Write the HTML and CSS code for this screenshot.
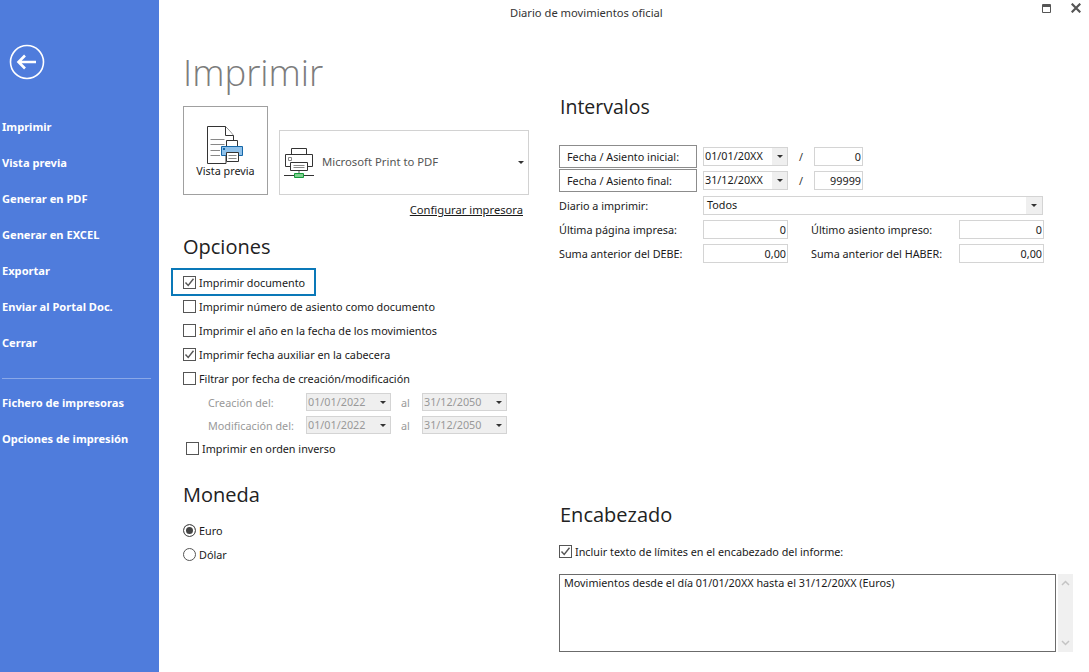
FILE: index.html
```html
<!DOCTYPE html>
<html lang="es">
  <head>
    <meta charset="UTF-8" />
    <title>Diario de movimientos oficial</title>
    <link rel="stylesheet" href="styles.css">
  </head>
  <body>
    <div class="app">
      <nav class="side">
        <svg class="back" width="36" height="36" viewBox="0 0 36 36">
          <circle cx="18" cy="18" r="16.5" fill="none" stroke="#fff" stroke-width="1.6"/>
          <path d="M9.500 18H27M16 11.500L9.500 18L16 24.500" fill="none" stroke="#fff" stroke-width="2.600"/>
        </svg>
        <a class="side-item">Imprimir</a>
        <a class="side-item">Vista previa</a>
        <a class="side-item">Generar en PDF</a>
        <a class="side-item">Generar en EXCEL</a>
        <a class="side-item">Exportar</a>
        <a class="side-item">Enviar al Portal Doc.</a>
        <a class="side-item">Cerrar</a>
        <div class="side-line"></div>
        <a class="side-item">Fichero de impresoras</a>
        <a class="side-item">Opciones de impresión</a>
      </nav>
      <div class="page">
        <header class="titlebar">
          <span class="window-title">Diario de movimientos oficial</span>
          <svg class="win-btn" width="9" height="9" viewBox="0 0 9 9">
            <path d="M.5.5H8.5V8.5H.5Z" fill="none" stroke="#555"/>
            <path d="M0 1H9V3H0Z" fill="#555"/>
          </svg>
          <svg class="win-btn win-close" width="10" height="10" viewBox="0 0 10 10">
            <path d="M.7.7L9.3 9.3M9.3.7L.7 9.3" stroke="#555" stroke-width="2.2"/>
          </svg>
        </header>
        <main class="cols">
          <section class="col-left">
            <h1>Imprimir</h1>
            <div class="print-row">
              <button class="preview-btn">
                <svg width="37" height="38" viewBox="0 0 37 38">
                  <path d="M19 24V37.5H.5V.5H18.500L26.500 9.500V14" fill="none" stroke="#333"/>
                  <path d="M18.500.5V9.500H26.500" fill="#fff" stroke="#333"/>
                  <path d="M3.500 13.500H17.500M3.500 18.500H17.500M3.500 24.500H13M3.500 29.500H13" stroke="#888"/>
                  <path d="M19.500 14.500H30.500V21H19.500Z" fill="#fff" stroke="#333"/>
                  <path d="M14.500 20.500H35.500V29.500H14.500Z" fill="#8fc1ea" stroke="#1567a8"/>
                  <path d="M16 22H18V24H16Z" fill="#1567a8"/>
                  <path d="M19.500 26.500H31.500V35.500H19.500Z" fill="#fff" stroke="#333"/>
                  <path d="M21.500 29.500H29.500M21.500 32.500H29.500" stroke="#888"/>
                </svg>
                <span>Vista previa</span>
              </button>
              <div class="printer">
                <svg width="30" height="30" viewBox="0 0 30 30">
                  <path d="M7.500 7V.5H22.500V7" fill="none" stroke="#333"/>
                  <path d="M6 18.500H1.500V6.500H28.500V18.500H24" fill="none" stroke="#333"/>
                  <path d="M4.500 9.500H7.500V12.500H4.500Z" fill="none" stroke="#888"/>
                  <path d="M6.500 14.500H23.500V22.500H6.500Z" fill="#fff" stroke="#333"/>
                  <path d="M9.500 17.500H20.500M9.500 19.500H20.500" stroke="#888"/>
                  <path d="M15 23V26" stroke="#aaa" stroke-width="2"/>
                  <path d="M0 27.500H10M20 27.500H30" stroke="#333"/>
                  <path d="M10.500 25.500H19.500V29.500H10.500Z" fill="#7ed08f" stroke="#169c3c"/>
                </svg>
                <span class="printer-name">Microsoft Print to PDF</span>
                <i class="arrow"></i>
              </div>
            </div>
            <div class="config-row"><a class="config-link">Configurar impresora</a></div>

            <h2 class="h-opciones">Opciones</h2>
            <div class="focus-box">
              <label class="check-row">
                <span class="box"><svg width="11" height="11" viewBox="0 0 11 11"><path d="M1.500 5.500L4.200 8.500L9.500 1.800" fill="none" stroke="#555" stroke-width="1.400"/></svg></span>
                Imprimir documento
              </label>
            </div>
            <label class="check-row"><span class="box"></span>Imprimir número de asiento como documento</label>
            <label class="check-row"><span class="box"></span>Imprimir el año en la fecha de los movimientos</label>
            <label class="check-row">
              <span class="box"><svg width="11" height="11" viewBox="0 0 11 11"><path d="M1.500 5.500L4.200 8.500L9.500 1.800" fill="none" stroke="#555" stroke-width="1.400"/></svg></span>
              Imprimir fecha auxiliar en la cabecera
            </label>
            <label class="check-row"><span class="box"></span>Filtrar por fecha de creación/modificación</label>
            <div class="date-filter">
              <span class="filter-label">Creación del:</span>
              <div class="combo combo-off"><span>01/01/2022</span><b><i class="arrow"></i></b></div>
              <span class="filter-al">al</span>
              <div class="combo combo-off"><span>31/12/2050</span><b><i class="arrow"></i></b></div>
            </div>
            <div class="date-filter">
              <span class="filter-label">Modificación del:</span>
              <div class="combo combo-off"><span>01/01/2022</span><b><i class="arrow"></i></b></div>
              <span class="filter-al">al</span>
              <div class="combo combo-off"><span>31/12/2050</span><b><i class="arrow"></i></b></div>
            </div>
            <label class="check-row check-inverse"><span class="box"></span>Imprimir en orden inverso</label>

            <h2 class="h-moneda">Moneda</h2>
            <label class="check-row"><span class="radio radio-on"></span>Euro</label>
            <label class="check-row"><span class="radio"></span>Dólar</label>
          </section>

          <section class="col-right">
            <h2 class="h-intervalos">Intervalos</h2>
            <div class="range-row">
              <span class="range-label">Fecha / Asiento inicial:</span>
              <div class="combo"><span>01/01/20XX</span><b><i class="arrow"></i></b></div>
              <span class="slash">/</span>
              <input class="field field-small" value="0">
            </div>
            <div class="range-row">
              <span class="range-label">Fecha / Asiento final:</span>
              <div class="combo"><span>31/12/20XX</span><b><i class="arrow"></i></b></div>
              <span class="slash">/</span>
              <input class="field field-small" value="99999">
            </div>
            <div class="form-row form-row-diario">
              <span class="form-label">Diario a imprimir:</span>
              <div class="combo combo-wide"><span>Todos</span><b><i class="arrow"></i></b></div>
            </div>
            <div class="form-row">
              <span class="form-label">Última página impresa:</span>
              <input class="field" value="0">
              <span class="form-label form-label-2">Último asiento impreso:</span>
              <input class="field" value="0">
            </div>
            <div class="form-row">
              <span class="form-label">Suma anterior del DEBE:</span>
              <input class="field" value="0,00">
              <span class="form-label form-label-2">Suma anterior del HABER:</span>
              <input class="field" value="0,00">
            </div>

            <h2 class="h-encabezado">Encabezado</h2>
            <label class="check-row check-limits">
              <span class="box"><svg width="11" height="11" viewBox="0 0 11 11"><path d="M1.500 5.500L4.200 8.500L9.500 1.800" fill="none" stroke="#555" stroke-width="1.400"/></svg></span>
              Incluir texto de límites en el encabezado del informe:
            </label>
            <div class="memo-row">
              <div class="memo">Movimientos desde el día 01/01/20XX hasta el 31/12/20XX (Euros)</div>
              <div class="scroll">
                <svg width="9" height="6" viewBox="0 0 9 6"><path d="M1 5L4.500 1.500L8 5" fill="none" stroke="#c4c4c4" stroke-width="1.500"/></svg>
                <svg width="9" height="6" viewBox="0 0 9 6"><path d="M1 1L4.500 4.500L8 1" fill="none" stroke="#c4c4c4" stroke-width="1.500"/></svg>
              </div>
            </div>
          </section>
        </main>
      </div>
    </div>
  </body>
</html>
```
FILE: styles.css
```css
* {
  box-sizing: border-box;
}
html,
body {
  margin: 0;
  padding: 0;
  height: 100%;
  overflow: hidden;
}
body {
  font-family: "Noto Sans", "Open Sans", sans-serif;
  font-size: 10.8px;
  color: #1a1a1a;
  background: #fff;
}
h1,
h2 {
  margin: 0;
  font-weight: 400;
}
.app {
  display: flex;
  height: 672px;
}

/* left blue bar */
.side {
  width: 159px;
  flex-shrink: 0;
  background: #4f7cdc;
  color: #fff;
  padding-top: 44px;
}
.back {
  display: block;
  margin: 0 0 29px 9px;
}
.side-item {
  display: block;
  height: 36px;
  line-height: 36px;
  padding-left: 2px;
  font-weight: 700;
  font-size: 11.1px;
  white-space: nowrap;
}
.side-line {
  height: 1px;
  margin: 17px 8px 6px 2px;
  background: #8aa8e8;
}

.page {
  flex-grow: 1;
  min-width: 0;
}
.titlebar {
  display: flex;
  align-items: center;
  height: 24px;
  padding-left: 351px;
}
.window-title {
  width: 532px;
  font-size: 11.2px;
  color: #333;
}
.win-btn {
  margin-top: -8px;
}
.win-close {
  margin-left: 20px;
}

.cols {
  display: flex;
}
.col-left {
  width: 401px;
  padding-left: 24px;
  flex-shrink: 0;
}
.col-right {
  flex-grow: 0;
  width: 520px;
}

h1 {
  font-family: "Open Sans", sans-serif;
  font-weight: 300;
  font-size: 36.5px;
  line-height: 52px;
  height: 60px;
  margin-top: 22px;
  color: #7c7c7c;
}
.print-row {
  display: flex;
  align-items: flex-end;
  gap: 11px;
}
.preview-btn {
  width: 85px;
  height: 89px;
  padding: 19px 0 0;
  display: flex;
  flex-direction: column;
  align-items: center;
  background: #fff;
  border: 1px solid #a0a0a0;
  font: inherit;
  color: #1a1a1a;
}
.preview-btn span {
  margin-top: -1px;
  line-height: 16px;
}
.printer {
  width: 250px;
  height: 65px;
  display: flex;
  align-items: center;
  border: 1px solid #d2d2d2;
  padding: 0 4px;
}
.printer-name {
  flex-grow: 1;
  margin: -2px 0 0 8px;
  font-size: 11.3px;
  color: #555;
}
.arrow {
  display: block;
  width: 0;
  height: 0;
  border-left: 3px solid transparent;
  border-right: 3px solid transparent;
  border-top: 3px solid #333;
}
.config-row {
  display: flex;
  justify-content: flex-end;
  width: 340px;
  height: 30px;
  line-height: 30px;
}
.config-link {
  text-decoration: underline;
  font-size: 11.2px;
}
.h-opciones,
.h-moneda,
.h-intervalos,
.h-encabezado {
  font-family: "Open Sans", sans-serif;
  font-size: 20px;
  line-height: 28px;
  color: #222;
}
.h-opciones {
  margin-top: 8px;
  height: 37px;
}

.check-row {
  display: flex;
  align-items: center;
  gap: 3px;
  height: 24px;
  white-space: nowrap;
}
.box {
  width: 13px;
  height: 13px;
  border: 1px solid #555;
  display: flex;
  align-items: center;
  justify-content: center;
  background: #fff;
}
.focus-box {
  width: 145px;
  height: 28px;
  margin: -2px 0 -2px -12px;
  padding: 2px 0 0 12px;
  border: 2px solid #0a78b8;
}
.focus-box .check-row {
  margin: -2px 0 0 -2px;
}
.date-filter {
  display: flex;
  align-items: center;
  height: 24px;
  color: #999;
}
.date-filter + .date-filter {
  height: 22px;
}
.filter-label {
  width: 123px;
  padding-left: 25px;
}
.filter-al {
  width: 31px;
  padding-left: 10px;
}
.combo {
  display: flex;
  width: 85px;
  height: 19px;
  border: 1px solid #d4d4d4;
  background: #fff;
  line-height: 16px;
  padding-left: 1px;
}
.combo span {
  flex-grow: 1;
}
.combo b {
  width: 15px;
  display: flex;
  align-items: center;
  justify-content: center;
  background: #efefef;
}
.combo-off {
  height: 18px;
  background: #efefef;
}
.check-inverse {
  padding-left: 3px;
}
.h-moneda {
  margin-top: 21px;
  height: 37px;
}
.radio {
  width: 13px;
  height: 13px;
  border: 1px solid #555;
  border-radius: 50%;
  background: #fff;
}
.radio-on {
  background: #444;
  box-shadow: inset 0 0 0 2px #fff;
}

.h-intervalos {
  margin-top: 69px;
  height: 51px;
  font-size: 19.5px;
}
.range-row {
  display: flex;
  align-items: center;
  height: 24px;
}
.range-label {
  width: 138px;
  height: 23px;
  line-height: 21px;
  padding-left: 7px;
  margin-left: -1px;
  border: 1px solid #8c8c8c;
  margin-right: 6px;
}
.slash {
  width: 26px;
  text-align: center;
  color: #333;
}
.field {
  width: 85px;
  height: 19px;
  border: 1px solid #d4d4d4;
  font: inherit;
  color: inherit;
  text-align: right;
  padding: 0 1px 0 0;
  margin: 0;
  background: #fff;
}
.field-small {
  width: 49px;
}
.form-row {
  display: flex;
  align-items: center;
  height: 24px;
  white-space: nowrap;
}
.form-row-diario {
  margin-top: 1px;
}
.form-label {
  width: 144px;
  margin-left: -1px;
}
.form-label-2 {
  width: 171px;
  margin-left: 0;
  padding-left: 23px;
}
.combo-wide {
  width: 340px;
}
.combo-wide span {
  padding-left: 2px;
}
.combo-wide b {
  width: 16px;
}
.h-encabezado {
  margin-top: 236px;
  height: 38px;
}
.check-limits {
  margin-left: -1px;
}
.memo-row {
  display: flex;
  margin: 11px 0 0 -1px;
  gap: 2px;
}
.memo {
  width: 497px;
  height: 78px;
  border: 1px solid #6b6b6b;
  padding: 0 4px;
}
.scroll {
  width: 15px;
  height: 78px;
  background: #f0f0f0;
  display: flex;
  flex-direction: column;
  align-items: center;
  justify-content: space-between;
  padding: 6px 0;
}
```
